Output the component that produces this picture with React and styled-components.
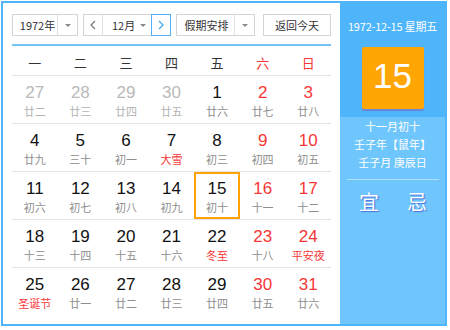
import React from 'react';
import styled, { createGlobalStyle } from 'styled-components';

const GlobalStyle = createGlobalStyle`
  html, body { margin: 0; padding: 0; background: #fff; }
  body { font-family: "Liberation Sans", "Noto Sans CJK SC", sans-serif; }
`;

const CJK = `"Noto Sans CJK SC", "Liberation Sans", sans-serif`;

const Widget = styled.div`
  margin: 1px 0 0 1px;
  width: 446px;
  height: 325px;
  box-sizing: border-box;
  border: 2px solid #4fb5fb;
  display: flex;
  background: #fff;
`;

const Main = styled.div`
  width: 337px;
  box-sizing: border-box;
  padding: 11px 9px 0 9px;
`;

const Toolbar = styled.div`
  display: flex;
  height: 22px;
  font-size: 11px;
  color: #333;
`;

const Select = styled.div`
  display: flex;
  box-sizing: border-box;
  height: 22px;
  width: ${p => p.$w}px;
  margin-left: ${p => p.$gap || 0}px;
  border: 1px solid #d5d5d5;
  background: #fff;
`;

const SelectLabel = styled.div`
  flex: 1;
  display: flex;
  align-items: center;
  justify-content: center;
  padding-left: ${p => p.$pl || 0}px;
  font-family: ${CJK};
`;

const ArrowCell = styled.div`
  width: 19px;
  display: flex;
  align-items: center;
  justify-content: center;
  border-left: 1px solid #e2e2e2;
`;

const Caret = styled.span`
  width: 0;
  height: 0;
  border-left: 3px solid transparent;
  border-right: 3px solid transparent;
  border-top: 3px solid #8a8a8a;
`;

const MonthGroup = styled.div`
  display: flex;
  width: 88px;
  height: 22px;
  margin-left: 5px;
`;

const NavBtn = styled.div`
  box-sizing: border-box;
  width: ${p => p.$w}px;
  height: 22px;
  display: flex;
  align-items: center;
  justify-content: center;
  background: #fff;
  border: 1px solid ${p => (p.$active ? '#4fb2f5' : '#d5d5d5')};
  border-right-color: ${p => (p.$active ? '#4fb2f5' : '#e2e2e2')};
  color: ${p => (p.$active ? '#3fa6ef' : '#777')};
`;

const MonthSelect = styled.div`
  flex: 1;
  box-sizing: border-box;
  height: 22px;
  display: flex;
  align-items: center;
  gap: 5px;
  padding-left: 9px;
  border-top: 1px solid #d5d5d5;
  border-bottom: 1px solid #d5d5d5;
  font-family: ${CJK};
`;

const TodayBtn = styled.div`
  box-sizing: border-box;
  width: 68px;
  height: 22px;
  margin-left: 8px;
  border: 1px solid #d5d5d5;
  display: flex;
  align-items: center;
  justify-content: center;
  font-family: ${CJK};
  background: #fff;
`;

const BlueRule = styled.div`
  margin-top: 8px;
  height: 2px;
  background: #74c4f6;
`;

const WeekHead = styled.div`
  display: grid;
  grid-template-columns: repeat(7, 1fr);
  height: 29px;
  font-family: ${CJK};
  font-size: 13px;
`;

const WeekDay = styled.div`
  display: flex;
  align-items: center;
  justify-content: center;
  padding-top: 3px;
  color: ${p => (p.$red ? '#f63737' : '#333')};
`;

const Row = styled.div`
  display: grid;
  grid-template-columns: repeat(7, 1fr);
  height: 48px;
  box-sizing: border-box;
  border-top: 1px solid #e3e3e3;
`;

const Cell = styled.div`
  display: flex;
  flex-direction: column;
  align-items: center;
  padding-top: 7px;
  box-shadow: ${p => (p.$selected ? 'inset 0 0 0 2px #ffa404' : 'none')};
`;

const Num = styled.div`
  font-family: "Liberation Sans", sans-serif;
  font-size: 17px;
  line-height: 20px;
  color: ${p => (p.$tone === 'gray' ? '#b9b9b9' : p.$tone === 'red' ? '#f63737' : '#111')};
`;

const Lunar = styled.div`
  margin-top: 1px;
  font-family: ${CJK};
  font-size: 11px;
  line-height: 14px;
  color: ${p => (p.$fest ? '#f63737' : p.$tone === 'gray' ? '#b3b3b3' : '#8e8e8e')};
`;

const Side = styled.div`
  flex: 1;
  display: flex;
  flex-direction: column;
  color: #fff;
`;

const SideTop = styled.div`
  height: 114px;
  background: #4eb5fb;
  display: flex;
  flex-direction: column;
  align-items: center;
  padding-top: 16px;
  box-sizing: border-box;
`;

const DateLine = styled.div`
  font-family: ${CJK};
  font-size: 11px;
  line-height: 14px;
  letter-spacing: -0.2px;
`;

const BigDay = styled.div`
  margin-top: 14px;
  width: 62px;
  height: 62px;
  border-radius: 2px;
  background: #ffa603;
  box-shadow: 0 2px 1px #6a86d6;
  display: flex;
  align-items: center;
  justify-content: center;
  padding-bottom: 5px;
  box-sizing: border-box;
  font-family: "Liberation Sans", sans-serif;
  font-size: 35px;
`;

const SideBottom = styled.div`
  flex: 1;
  background: #6fc6fd;
  display: flex;
  flex-direction: column;
  align-items: center;
`;

const LunarLine = styled.div`
  font-family: ${CJK};
  font-size: 11px;
  line-height: 18px;
`;

const SideRule = styled.div`
  align-self: stretch;
  margin: 8px 6px 0 7px;
  height: 1px;
  background: rgba(255, 255, 255, 0.45);
`;

const YiJi = styled.div`
  display: flex;
  gap: 28px;
  margin-top: 10px;
  padding-left: 1px;
  font-family: ${CJK};
  font-size: 20px;
  line-height: 24px;
  text-shadow: 1px 1px 1px rgba(70, 80, 210, 0.75);
`;

const Chevron = ({ dir }) => (
  <svg width="6" height="10" viewBox="0 0 6 10">
    <polyline
      points={dir === 'left' ? '5,1 1,5 5,9' : '1,1 5,5 1,9'}
      fill="none"
      stroke="currentColor"
      strokeWidth="1.2"
    />
  </svg>
);

const weekdays = ['一', '二', '三', '四', '五', '六', '日'];

// [day, lunar, tone, festival, selected]
const weeks = [
  [[27, '廿二', 'gray'], [28, '廿三', 'gray'], [29, '廿四', 'gray'], [30, '廿五', 'gray'], [1, '廿六'], [2, '廿七', 'red'], [3, '廿八', 'red']],
  [[4, '廿九'], [5, '三十'], [6, '初一'], [7, '大雪', null, true], [8, '初三'], [9, '初四', 'red'], [10, '初五', 'red']],
  [[11, '初六'], [12, '初七'], [13, '初八'], [14, '初九'], [15, '初十', null, false, true], [16, '十一', 'red'], [17, '十二', 'red']],
  [[18, '十三'], [19, '十四'], [20, '十五'], [21, '十六'], [22, '冬至', null, true], [23, '十八', 'red'], [24, '平安夜', 'red', true]],
  [[25, '圣诞节', null, true], [26, '廿一'], [27, '廿二'], [28, '廿三'], [29, '廿四'], [30, '廿五', 'red'], [31, '廿六', 'red']],
];

export default function App() {
  return (
    <>
      <GlobalStyle />
      <Widget>
        <Main>
          <Toolbar>
            <Select $w={66}>
              <SelectLabel $pl={5}>1972年</SelectLabel>
              <ArrowCell><Caret /></ArrowCell>
            </Select>
            <MonthGroup>
              <NavBtn $w={20}><Chevron dir="left" /></NavBtn>
              <MonthSelect>12月<Caret /></MonthSelect>
              <NavBtn $w={20} $active><Chevron dir="right" /></NavBtn>
            </MonthGroup>
            <Select $w={79} $gap={5}>
              <SelectLabel $pl={2}>假期安排</SelectLabel>
              <ArrowCell><Caret /></ArrowCell>
            </Select>
            <TodayBtn>返回今天</TodayBtn>
          </Toolbar>
          <BlueRule />
          <WeekHead>
            {weekdays.map((w, i) => (
              <WeekDay key={w} $red={i >= 5}>{w}</WeekDay>
            ))}
          </WeekHead>
          {weeks.map((week, wi) => (
            <Row key={wi}>
              {week.map(([d, l, tone, fest, sel], di) => (
                <Cell key={di} $selected={sel}>
                  <Num $tone={tone}>{d}</Num>
                  <Lunar $tone={tone} $fest={fest}>{l}</Lunar>
                </Cell>
              ))}
            </Row>
          ))}
        </Main>
        <Side>
          <SideTop>
            <DateLine>1972-12-15 星期五</DateLine>
            <BigDay>15</BigDay>
          </SideTop>
          <SideBottom>
            <LunarLine>十一月初十</LunarLine>
            <LunarLine>壬子年【鼠年】</LunarLine>
            <LunarLine>壬子月 庚辰日</LunarLine>
            <SideRule />
            <YiJi>
              <span>宜</span>
              <span>忌</span>
            </YiJi>
          </SideBottom>
        </Side>
      </Widget>
    </>
  );
}
